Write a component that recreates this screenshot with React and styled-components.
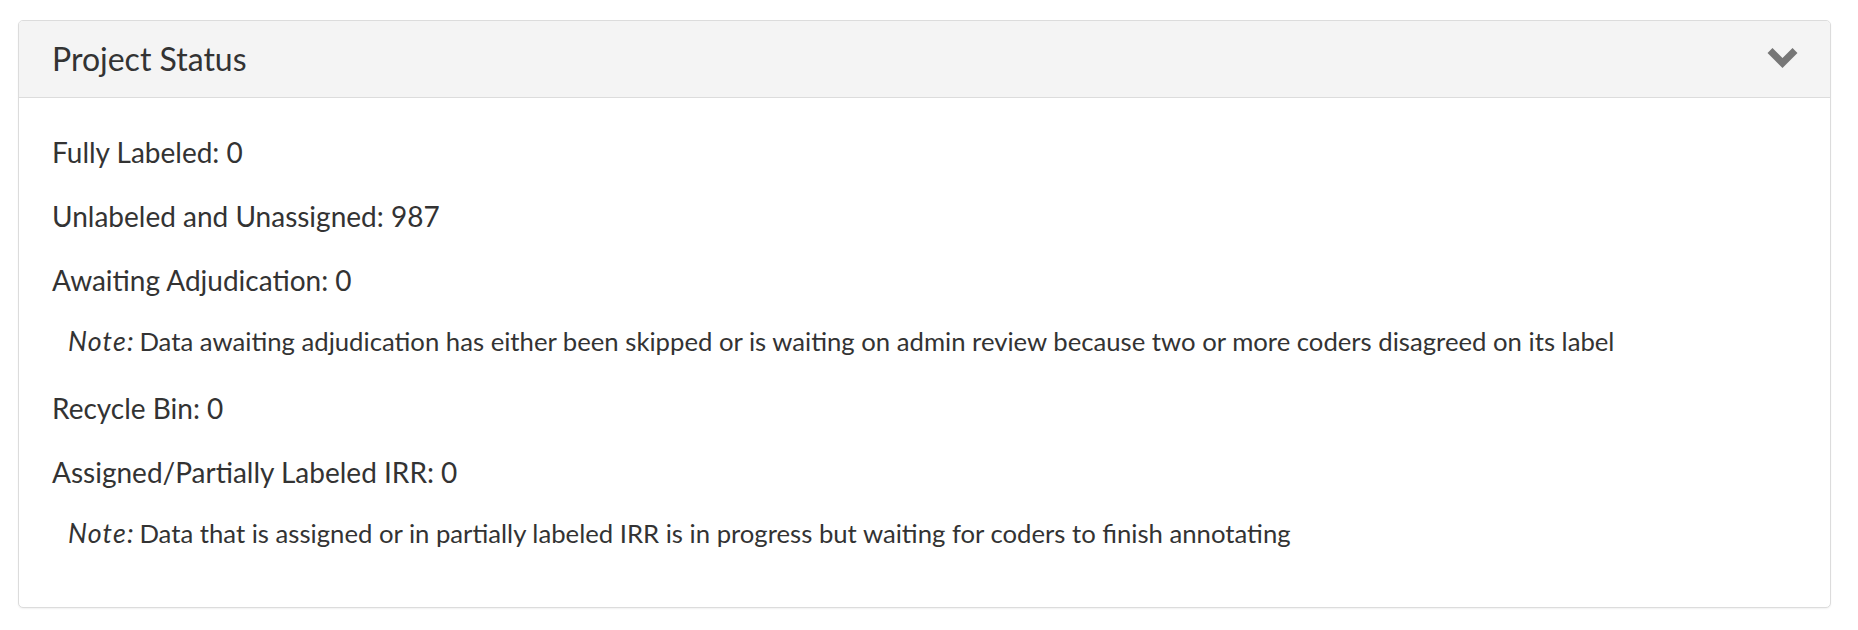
import React from "react";
import styled, { createGlobalStyle } from "styled-components";

const GlobalStyle = createGlobalStyle`
  html, body { margin: 0; padding: 0; background: #fff; }
  body { font-family: Lato, "Open Sans", "Liberation Sans", sans-serif; color: #333; }
`;

const Page = styled.div`
  padding: 20px 27px 20px 18px;
`;

const Panel = styled.section`
  border: 1px solid #dcdcdc;
  border-radius: 5px;
  background: #fff;
  box-shadow: 0 1px 2px rgba(0, 0, 0, 0.06);
  overflow: hidden;
`;

const Header = styled.header`
  display: flex;
  align-items: center;
  justify-content: space-between;
  height: 76px;
  padding: 0 30px 0 33px;
  background: #f4f4f4;
  border-bottom: 1px solid #dcdcdc;
`;

const Title = styled.h3`
  margin: 0;
  font-size: 32px;
  font-weight: 400;
  color: #333;
  line-height: 1;
`;

const Toggle = styled.button`
  border: 0;
  background: none;
  padding: 0;
  display: flex;
  cursor: pointer;
`;

const Body = styled.div`
  padding: 36px 33px 55px;
`;

const Stat = styled.p`
  margin: 0 0 27px;
  font-size: 28px;
  line-height: 37px;
`;

const Note = styled.p`
  margin: -3px 0 30px 16px;
  font-size: 25.7px;
  line-height: 37px;
  &:last-child { margin-bottom: 0; }
`;

const NoteLabel = styled.em`
  font-style: italic;
  font-size: 1.04em;
  letter-spacing: 1.2px;
  margin-right: -2px;
`;

const Chevron = () => (
  <svg width="34" height="26" viewBox="0 0 34 26">
    <polyline
      points="4,4.5 16.5,17 29,4.5"
      fill="none"
      stroke="#777"
      strokeWidth="7"
      strokeLinejoin="miter"
    />
  </svg>
);

const stats = [
  { label: "Fully Labeled", value: 0 },
  { label: "Unlabeled and Unassigned", value: 987 },
  {
    label: "Awaiting Adjudication",
    value: 0,
    note: "Data awaiting adjudication has either been skipped or is waiting on admin review because two or more coders disagreed on its label",
  },
  { label: "Recycle Bin", value: 0 },
  {
    label: "Assigned/Partially Labeled IRR",
    value: 0,
    note: "Data that is assigned or in partially labeled IRR is in progress but waiting for coders to finish annotating",
  },
];

export default function App() {
  return (
    <>
      <GlobalStyle />
      <Page>
        <Panel>
          <Header>
            <Title>Project Status</Title>
            <Toggle aria-label="Collapse">
              <Chevron />
            </Toggle>
          </Header>
          <Body>
            {stats.map((s) => (
              <React.Fragment key={s.label}>
                <Stat>
                  {s.label}: {s.value}
                </Stat>
                {s.note && (
                  <Note>
                    <NoteLabel>Note:</NoteLabel> {s.note}
                  </Note>
                )}
              </React.Fragment>
            ))}
          </Body>
        </Panel>
      </Page>
    </>
  );
}
